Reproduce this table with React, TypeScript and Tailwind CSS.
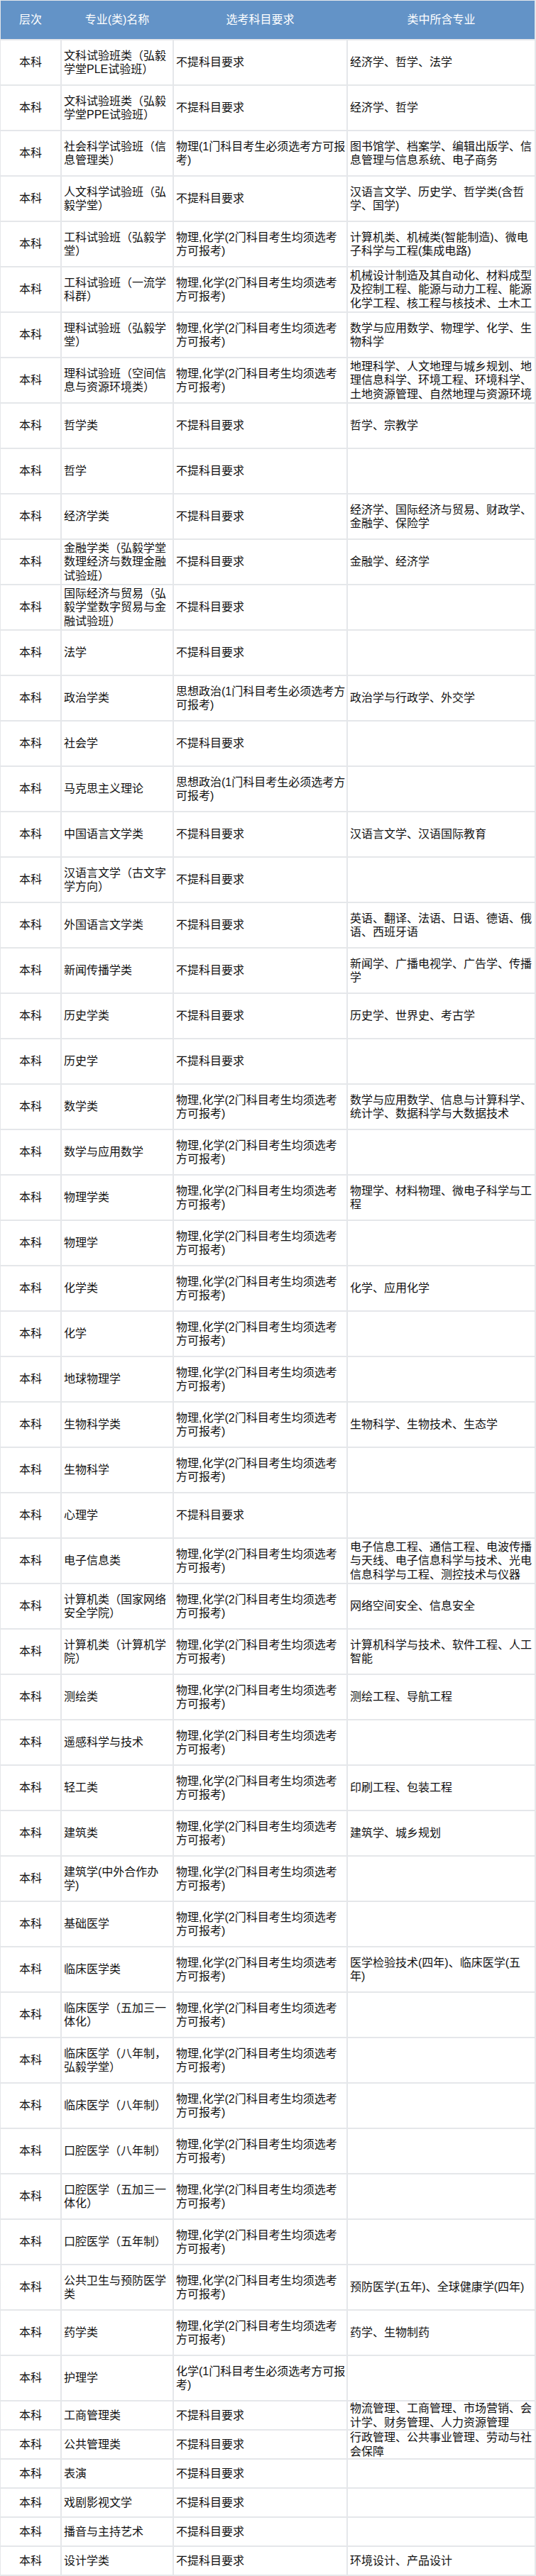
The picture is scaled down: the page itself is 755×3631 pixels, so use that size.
import React from "react"

const NONE = "不提科目要求"
const PC = "物理,化学(2门科目考生均须选考方可报考)"
const PHY = "物理(1门科目考生必须选考方可报考)"
const POL = "思想政治(1门科目考生必须选考方可报考)"
const CHEM = "化学(1门科目考生必须选考方可报考)"

// [专业(类)名称, 选考科目要求, 类中所含专业]
const ROWS: [string, string, string][] = [
  ["文科试验班类（弘毅学堂PLE试验班）", NONE, "经济学、哲学、法学"],
  ["文科试验班类（弘毅学堂PPE试验班）", NONE, "经济学、哲学"],
  ["社会科学试验班（信息管理类）", PHY, "图书馆学、档案学、编辑出版学、信息管理与信息系统、电子商务"],
  ["人文科学试验班（弘毅学堂）", NONE, "汉语言文学、历史学、哲学类(含哲学、国学)"],
  ["工科试验班（弘毅学堂）", PC, "计算机类、机械类(智能制造)、微电子科学与工程(集成电路)"],
  ["工科试验班（一流学科群）", PC, "机械设计制造及其自动化、材料成型及控制工程、能源与动力工程、能源化学工程、核工程与核技术、土木工程"],
  ["理科试验班（弘毅学堂）", PC, "数学与应用数学、物理学、化学、生物科学"],
  ["理科试验班（空间信息与资源环境类）", PC, "地理科学、人文地理与城乡规划、地理信息科学、环境工程、环境科学、土地资源管理、自然地理与资源环境"],
  ["哲学类", NONE, "哲学、宗教学"],
  ["哲学", NONE, ""],
  ["经济学类", NONE, "经济学、国际经济与贸易、财政学、金融学、保险学"],
  ["金融学类（弘毅学堂数理经济与数理金融试验班）", NONE, "金融学、经济学"],
  ["国际经济与贸易（弘毅学堂数字贸易与金融试验班）", NONE, ""],
  ["法学", NONE, ""],
  ["政治学类", POL, "政治学与行政学、外交学"],
  ["社会学", NONE, ""],
  ["马克思主义理论", POL, ""],
  ["中国语言文学类", NONE, "汉语言文学、汉语国际教育"],
  ["汉语言文学（古文字学方向）", NONE, ""],
  ["外国语言文学类", NONE, "英语、翻译、法语、日语、德语、俄语、西班牙语"],
  ["新闻传播学类", NONE, "新闻学、广播电视学、广告学、传播学"],
  ["历史学类", NONE, "历史学、世界史、考古学"],
  ["历史学", NONE, ""],
  ["数学类", PC, "数学与应用数学、信息与计算科学、统计学、数据科学与大数据技术"],
  ["数学与应用数学", PC, ""],
  ["物理学类", PC, "物理学、材料物理、微电子科学与工程"],
  ["物理学", PC, ""],
  ["化学类", PC, "化学、应用化学"],
  ["化学", PC, ""],
  ["地球物理学", PC, ""],
  ["生物科学类", PC, "生物科学、生物技术、生态学"],
  ["生物科学", PC, ""],
  ["心理学", NONE, ""],
  ["电子信息类", PC, "电子信息工程、通信工程、电波传播与天线、电子信息科学与技术、光电信息科学与工程、测控技术与仪器"],
  ["计算机类（国家网络安全学院）", PC, "网络空间安全、信息安全"],
  ["计算机类（计算机学院）", PC, "计算机科学与技术、软件工程、人工智能"],
  ["测绘类", PC, "测绘工程、导航工程"],
  ["遥感科学与技术", PC, ""],
  ["轻工类", PC, "印刷工程、包装工程"],
  ["建筑类", PC, "建筑学、城乡规划"],
  ["建筑学(中外合作办学)", PC, ""],
  ["基础医学", PC, ""],
  ["临床医学类", PC, "医学检验技术(四年)、临床医学(五年)"],
  ["临床医学（五加三一体化）", PC, ""],
  ["临床医学（八年制，弘毅学堂）", PC, ""],
  ["临床医学（八年制）", PC, ""],
  ["口腔医学（八年制）", PC, ""],
  ["口腔医学（五加三一体化）", PC, ""],
  ["口腔医学（五年制）", PC, ""],
  ["公共卫生与预防医学类", PC, "预防医学(五年)、全球健康学(四年)"],
  ["药学类", PC, "药学、生物制药"],
  ["护理学", CHEM, ""],
  ["工商管理类", NONE, "物流管理、工商管理、市场营销、会计学、财务管理、人力资源管理"],
  ["公共管理类", NONE, "行政管理、公共事业管理、劳动与社会保障"],
  ["表演", NONE, ""],
  ["戏剧影视文学", NONE, ""],
  ["播音与主持艺术", NONE, ""],
  ["设计学类", NONE, "环境设计、产品设计"],
]

const gridCols = "grid grid-cols-[84px_156px_243px_263px] gap-x-[2px]"
const cellClass = "bg-white flex items-center pl-[3px] pr-[1px] overflow-hidden"

function Cell({ text }: { text: string }) {
  return (
    <div className={cellClass}>
      <div className="max-h-[58.5px] overflow-hidden break-all">{text}</div>
    </div>
  )
}

export default function App() {
  return (
    <div
      className="w-[755px] bg-[#e5e7ea] pl-[1px] pr-[2px] pt-[1px] pb-[2px] text-[16px] leading-[19.5px] text-[#111]"
      style={{ fontFamily: '"Liberation Sans", "Noto Sans CJK SC", sans-serif' }}
    >
      <div className="flex flex-col gap-y-[2px]">
        <div className={`${gridCols} h-[54px] bg-[#6393c7] text-white`}>
          <div className="flex items-center justify-center">层次</div>
          <div className="flex items-center justify-center">专业(类)名称</div>
          <div className="flex items-center justify-center">选考科目要求</div>
          <div className="flex items-center justify-center">类中所含专业</div>
        </div>

        {ROWS.map(([name, req, inc], i) => (
          <div key={name} className={`${gridCols} ${i >= 52 ? "h-[39px]" : "h-[62px]"}`}>
            <div className="bg-white flex items-center justify-center">本科</div>
            <Cell text={name} />
            <Cell text={req} />
            <Cell text={inc} />
          </div>
        ))}
      </div>
    </div>
  )
}
